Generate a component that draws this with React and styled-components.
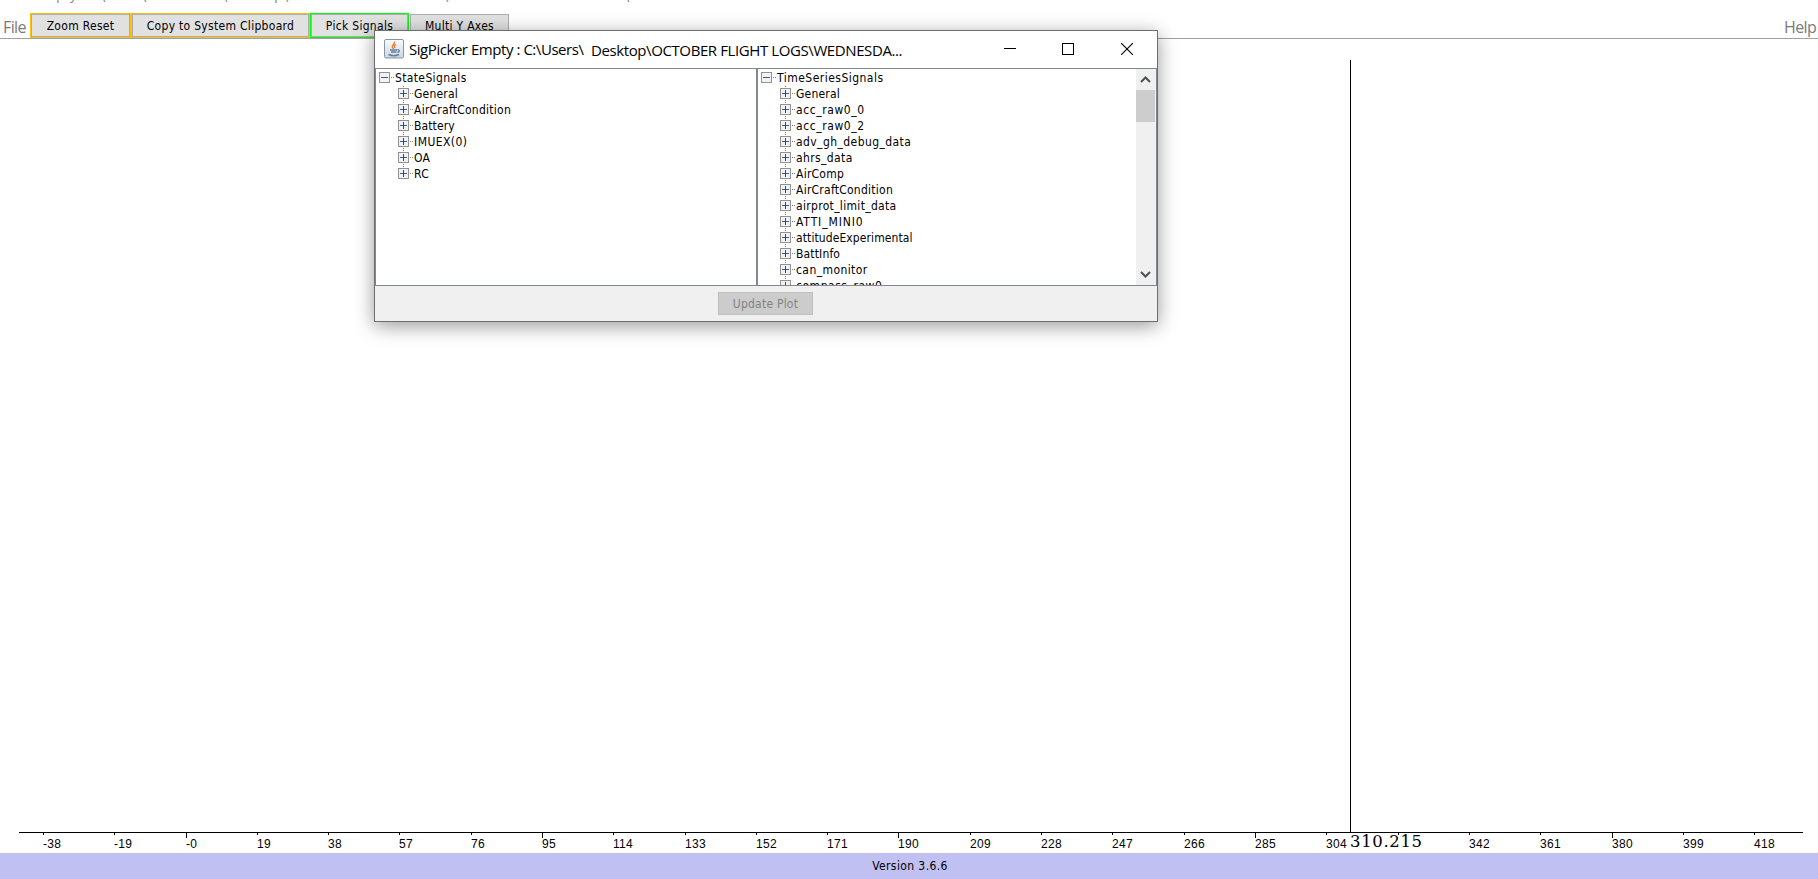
import styled, { createGlobalStyle } from 'styled-components';

const GlobalStyle = createGlobalStyle`
    * {
        box-sizing: border-box;
    }

    body {
        margin: 0;
        background: #ffffff;
        overflow: hidden;
    }
`;

const tahoma = `'DejaVu Sans Condensed', 'DejaVu Sans', sans-serif`;
const segoe = `'Open Sans', 'Noto Sans', sans-serif`;

const Page = styled.div`
    position: relative;
    display: flex;
    flex-direction: column;
    width: 1818px;
    height: 879px;
    overflow: hidden;
    color: #000000;
    font-family: ${tahoma};
    font-size: 12px;
`;

// only the descenders of the window title reach into view
const TitleStrip = styled.header`
    display: flex;
    height: 13px;
    overflow: hidden;
    color: #8c8c8c;
    font-family: ${segoe};
    font-size: 15px;
    line-height: 20px;
    letter-spacing: -0.4px;
`;

const PathPart = styled.span`
    display: flex;
    flex: none;
    justify-content: flex-end;
    width: ${({ $width }) => $width}px;
    height: 23px;
    margin-top: -17px;
    white-space: pre;
`;

const Slash = styled.span`
    padding-top: 3px;
`;

const MenuBar = styled.nav`
    display: flex;
    height: 26px;
    border-bottom: 1px solid #a0a0a0;
`;

const MenuItem = styled.span`
    width: ${({ $width }) => $width}px;
    padding-left: 3px;
    color: #7a7a7a;
    font-family: ${segoe};
    font-size: 16px;
    letter-spacing: -0.6px;
    line-height: 28px;
    white-space: nowrap;
`;

const ToolButton = styled.button`
    width: ${({ $width }) => $width}px;
    height: 25px;
    padding: 1px;
    border: 1px solid ${({ $ring }) => $ring || 'transparent'};
    background: #adadad;
    background-clip: padding-box;
    color: #000000;
    font-family: inherit;
    font-size: 12px;
    letter-spacing: 0.3px;

    span {
        display: block;
        height: 21px;
        background: #e1e1e1;
        line-height: 22px;
        white-space: nowrap;
    }
`;

const Spacer = styled.div`
    flex: 1;
`;

const Chart = styled.svg`
    display: block;
    flex: none;
    width: 1818px;
    height: 814px;
`;

const Footer = styled.footer`
    height: 26px;
    padding-left: 2px;
    background: #c0c0f2;
    letter-spacing: 0.4px;
    line-height: 27px;
    text-align: center;
`;

const Dialog = styled.section`
    position: absolute;
    top: 30px;
    left: 374px;
    display: flex;
    flex-direction: column;
    width: 784px;
    height: 292px;
    border: 1px solid #6c6e70;
    background: #f0f0f0;
    box-shadow: 0 4px 18px rgba(0, 0, 0, 0.4);
`;

const DialogTitle = styled.div`
    display: flex;
    align-items: flex-start;
    height: 37px;
    padding-left: 9px;
    background: #ffffff;

    > svg {
        margin-top: 8px;
    }

    h1 {
        display: flex;
        flex: 1;
        margin: 0 0 0 5px;
        font-family: ${segoe};
        font-size: 15px;
        font-weight: 400;
        line-height: 36px;
        white-space: pre;
    }
`;

const TitlePart = styled.span`
    width: ${({ $width }) => $width}px;
    padding-top: ${({ $drop }) => $drop || 0}px;
    letter-spacing: ${({ $spacing }) => $spacing || 0}px;
`;

const WindowButton = styled.button`
    width: ${({ $width }) => $width || 58}px;
    height: 36px;
    padding: 0;
    border: 0;
    background: none;

    svg {
        display: block;
        margin: auto;
    }
`;

const Panes = styled.div`
    display: flex;
    height: 218px;
`;

const Pane = styled.div`
    display: flex;
    width: ${({ $width }) => $width}px;
    border: 1px solid #828790;
    background: #ffffff;
    overflow: hidden;
`;

const Tree = styled.ul`
    flex: 1;
    margin: 0;
    padding: 1px 0 0 3px;
    list-style: none;

    ul {
        margin: 0;
        padding: 0 0 0 19px;
        list-style: none;
    }
`;

const TreeRow = styled.li`
    display: flex;
    align-items: flex-start;
    height: 16px;
    letter-spacing: ${({ $spacing }) => $spacing}px;
    line-height: 16px;
    white-space: nowrap;

    svg {
        flex: none;
        margin-right: 1px;
    }
`;

const Scrollbar = styled.div`
    display: flex;
    flex-direction: column;
    width: 20px;
    padding-right: 1px;
    background: #f0f0f0;

    svg {
        display: block;
        margin-left: 4px;
    }
`;

const Thumb = styled.div`
    height: 32px;
    background: #cdcdcd;
`;

const DialogActions = styled.div`
    display: flex;
    justify-content: center;
    padding: 6px 1px 0 0;
`;

const UpdateButton = styled.button`
    width: 95px;
    height: 23px;
    padding: 0;
    border: 1px solid #bfbfbf;
    background: #cccccc;
    color: #838383;
    font-family: inherit;
    font-size: 12px;
    letter-spacing: 0.22px;
    line-height: 20px;
`;

const stateSignals = [
    { name: 'General', spacing: 0.2 },
    { name: 'AirCraftCondition', spacing: 0.25 },
    { name: 'Battery', spacing: 0.1 },
    { name: 'IMUEX(0)', spacing: 0.45 },
    { name: 'OA', spacing: 0.3 },
    { name: 'RC', spacing: 0.3 },
];

const timeSeriesSignals = [
    { name: 'General', spacing: 0.2 },
    { name: 'acc_raw0_0', spacing: 0.58 },
    { name: 'acc_raw0_2', spacing: 0.58 },
    { name: 'adv_gh_debug_data', spacing: 0.42 },
    { name: 'ahrs_data', spacing: 0.38 },
    { name: 'AirComp', spacing: 0.25 },
    { name: 'AirCraftCondition', spacing: 0.25 },
    { name: 'airprot_limit_data', spacing: 0.32 },
    { name: 'ATTI_MINI0', spacing: 0.9 },
    { name: 'attitudeExperimental', spacing: 0.1 },
    { name: 'BattInfo', spacing: 0.15 },
    { name: 'can_monitor', spacing: 0.42 },
    { name: 'compass_raw0', spacing: 0.53 },
];

function Expander({ open, last }) {
    return (
        <svg width='15' height='16' shapeRendering='crispEdges'>
            {!open && <path d={`M5.5 0V2${last ? '' : 'M5.5 14V16'}`} stroke='#808080' strokeDasharray='1 1' />}
            <path d='M12 7.5H16' stroke='#808080' strokeDasharray='1 1' />
            <rect x='0.5' y='2.5' width='10' height='10' fill='#f2f2f2' stroke='#919191' />
            <path d='M2 7.5H9' stroke='#3c5aa0' />
            {!open && <path d='M5.5 4V11' stroke='#2b4482' />}
        </svg>
    );
}

function SignalTree({ root, signals }) {
    return (
        <Tree>
            <TreeRow $spacing={root === 'StateSignals' ? 0.36 : 0.48}><Expander open />{root}</TreeRow>
            <li>
                <ul>
                    {signals.map(({ name, spacing }, i) => (
                        <TreeRow key={name} $spacing={spacing}>
                            <Expander last={i === signals.length - 1} />
                            {name}
                        </TreeRow>
                    ))}
                </ul>
            </li>
        </Tree>
    );
}

function JavaIcon() {
    return (
        <svg width='20' height='20' viewBox='0 0 20 20'>
            <defs>
                <linearGradient id='tile' x1='0' y1='0' x2='0' y2='1'>
                    <stop offset='0' stopColor='#fbfcfd' />
                    <stop offset='1' stopColor='#ccd5dc' />
                </linearGradient>
            </defs>
            <rect x='0.5' y='0.5' width='19' height='18.5' rx='1.5' fill='url(#tile)' stroke='#8795a3' />
            <path d='M10.5 2.5C11.5 5 7 6 8.5 8.5L9.5 10M12 5.5C10 6.5 10 7.5 10.8 9' fill='none' stroke='#e8833a' strokeWidth='1.5' />
            <path d='M6 11H13M7 13H12.5M4.5 15.5C8 17 12 17 15 15.5M13.5 10.8C16 10.5 15.5 13 13.5 13.2' fill='none' stroke='#5d83a3' strokeWidth='1.4' />
        </svg>
    );
}

function SigPicker() {
    return (
        <Dialog>
            <DialogTitle>
                <JavaIcon />
                <h1>
                    <TitlePart $width={182} $spacing={-0.45}>{'SigPicker Empty : C:\\Users\\'}</TitlePart>
                    <TitlePart $width={312} $drop={1} $spacing={-0.4}>{'Desktop\\OCTOBER FLIGHT LOGS\\WEDNESDA...'}</TitlePart>
                </h1>
                <WindowButton aria-label='Minimize'>
                    <svg width='12' height='12' shapeRendering='crispEdges'><path d='M0 5.5H12' stroke='#000' /></svg>
                </WindowButton>
                <WindowButton aria-label='Maximize'>
                    <svg width='12' height='12' shapeRendering='crispEdges'><path d='M0.5 0.5H11.5V11.5H0.5Z' fill='none' stroke='#000' /></svg>
                </WindowButton>
                <WindowButton aria-label='Close' $width={60}>
                    <svg width='12' height='12'><path d='M0 0L12 12M12 0L0 12' stroke='#000' strokeWidth='1.1' /></svg>
                </WindowButton>
            </DialogTitle>
            <Panes>
                <Pane $width={382}>
                    <SignalTree root='StateSignals' signals={stateSignals} />
                </Pane>
                <Pane $width={400}>
                    <SignalTree root='TimeSeriesSignals' signals={timeSeriesSignals} />
                    <Scrollbar>
                        <svg width='11' height='21'><path d='M1 13L5.5 8.5L10 13' fill='none' stroke='#505050' strokeWidth='2' /></svg>
                        <Thumb />
                        <Spacer />
                        <svg width='11' height='17'><path d='M1 4L5.5 8.5L10 4' fill='none' stroke='#505050' strokeWidth='2' /></svg>
                    </Scrollbar>
                </Pane>
            </Panes>
            <DialogActions>
                <UpdateButton disabled>Update Plot</UpdateButton>
            </DialogActions>
        </Dialog>
    );
}

const ticks = Array.from({ length: 25 }, (_, i) => ({
    value: i === 2 ? '-0' : String((i - 2) * 19),
    x: Math.floor(43.4 + i * 71.3),
    major: i % 5 === 2,
}));

const AxisLabel = styled.text`
    font-family: 'Liberation Sans', sans-serif;
    font-size: 12px;
    letter-spacing: 0.33px;
`;

const CursorLabel = styled.text`
    font-family: 'DejaVu Serif', serif;
    font-size: 16.5px;
`;

// y values count from the top of the page, the menu bar ends at 39
function TimePlot() {
    return (
        <Chart viewBox='0 39 1818 814'>
            <g stroke='#000' shapeRendering='crispEdges'>
                <path d='M19 832.5H1803' />
                <path d='M1350.5 60V832' />
                {ticks.map(({ value, x, major }) => (
                    <path key={value} d={`M${x + 0.5} 833V${major ? 838 : 835}`} />
                ))}
            </g>
            {ticks.filter(({ value }) => value !== '323').map(({ value, x }) => (
                <AxisLabel key={value} x={x} y='848'>{value}</AxisLabel>
            ))}
            <CursorLabel x='1350' y='847' textLength='72'>310.215</CursorLabel>
        </Chart>
    );
}

const pathParts = [
    { name: 'Empty : C:', width: 105 },
    { name: 'Users', width: 41 },
    { name: '', width: 81 },
    { name: 'Desktop', width: 61 },
    { name: 'OCTOBER FLIGHT LOGS', width: 160 },
    { name: 'WEDNESDAY', width: 181 },
];

export default function App() {
    return (
        <>
            <GlobalStyle />
            <Page>
                <TitleStrip>
                    {pathParts.map(({ name, width }) => (
                        <PathPart key={width} $width={width}>{name}<Slash>{'\\'}</Slash></PathPart>
                    ))}
                </TitleStrip>
                <MenuBar>
                    <MenuItem $width={30}>File</MenuItem>
                    <ToolButton $width={101} $ring='#ffc000'><span>Zoom Reset</span></ToolButton>
                    <ToolButton $width={179} $ring='#ffc000'><span>Copy to System Clipboard</span></ToolButton>
                    <ToolButton $width={99} $ring='#00ff00'><span>Pick Signals</span></ToolButton>
                    <ToolButton $width={101}><span>Multi Y Axes</span></ToolButton>
                    <Spacer />
                    <MenuItem $width={37}>Help</MenuItem>
                </MenuBar>
                <TimePlot />
                <Footer>Version 3.6.6</Footer>
                <SigPicker />
            </Page>
        </>
    );
}
